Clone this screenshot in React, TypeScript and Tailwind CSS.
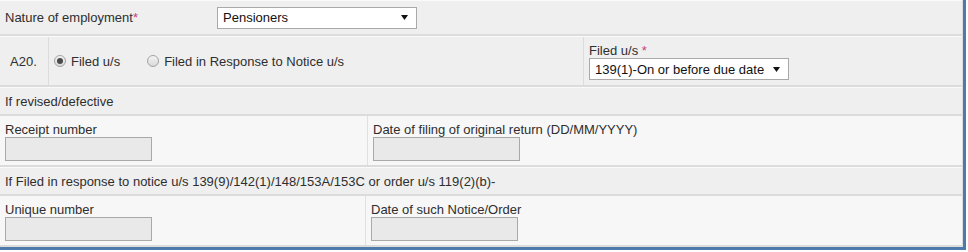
const Arrow = () => (
  <svg width="7" height="5" viewBox="0 0 7 5" className="shrink-0">
    <polygon points="0,0 7,0 3.5,5" fill="#111" />
  </svg>
);

const FakeSelect = ({ value }: { value: string }) => (
  <div className="w-[200px] h-[22px] bg-white border border-[#a9a9a9] flex items-center justify-between pl-[5px] pr-[8px] text-[13px] text-[#111]">
    <span>{value}</span>
    <Arrow />
  </div>
);

const Radio = ({ checked }: { checked?: boolean }) => (
  <span className="w-[12px] h-[12px] rounded-full border border-[#a3a3a3] bg-gradient-to-b from-[#f4f4f4] to-[#d9d9d9] flex items-center justify-center shrink-0">
    {checked && <span className="w-[6px] h-[6px] rounded-full bg-[#4a4a4a]" />}
  </span>
);

const Req = () => <span className="text-[#c8407a]">*</span>;

const Box = () => <div className="w-[147px] h-[24px] border border-[#a9a9a9] bg-[#e9e9e9]" />;

const App = () => {
  return (
    <div className="w-[966px] h-[250px] bg-[#dcdcdc] border-r-[3px] border-b-[3px] border-[#4e7bab] flex flex-col gap-[2px] pb-[2px] pr-[1px] font-['Liberation_Sans',Arial,sans-serif] text-[13px] leading-[15px] text-[#2e2e2e]">
      {/* nature of employment */}
      <div className="h-[34px] shrink-0 border-t border-[#fafafa] bg-[#efefef] flex items-center">
        <div className="w-[217px] pl-[5px]">
          Nature of employment<Req />
        </div>
        <FakeSelect value="Pensioners" />
      </div>

      {/* A20 */}
      <div className="h-[49px] shrink-0 border-t border-[#fafafa] bg-[#efefef] flex">
        <div className="w-[49px] border-r border-[#dcdcdc] flex items-center pl-[10px]">A20.</div>
        <div className="w-[535px] border-r border-[#dcdcdc] flex items-center pl-[5px]">
          <Radio checked />
          <span className="ml-[5px]">Filed u/s</span>
          <span className="ml-[27px]">
            <Radio />
          </span>
          <span className="ml-[5px]">Filed in Response to Notice u/s</span>
        </div>
        <div className="flex-1 pl-[5px] pt-[6px] flex flex-col">
          <div>
            Filed u/s <Req />
          </div>
          <FakeSelect value="139(1)-On or before due date" />
        </div>
      </div>

      <div className="h-[27px] shrink-0 border-t border-[#fafafa] bg-[#efefef] flex items-center pl-[5px]">
        If revised/defective
      </div>

      <div className="h-[49px] shrink-0 bg-[#f7f7f7] flex">
        <div className="w-[368px] border-r border-[#e0e0e0] pl-[5px] pt-[6px]">
          <div>Receipt number</div>
          <Box />
        </div>
        <div className="flex-1 pl-[5px] pt-[6px]">
          <div>Date of filing of original return (DD/MM/YYYY)</div>
          <Box />
        </div>
      </div>

      <div className="h-[27px] shrink-0 border-t border-[#fafafa] bg-[#efefef] flex items-center pl-[5px]">
        If Filed in response to notice u/s 139(9)/142(1)/148/153A/153C or order u/s 119(2)(b)-
      </div>

      <div className="h-[49px] shrink-0 bg-[#f7f7f7] flex">
        <div className="w-[366px] border-r border-[#e0e0e0] pl-[5px] pt-[6px]">
          <div>Unique number</div>
          <Box />
        </div>
        <div className="flex-1 pl-[5px] pt-[6px]">
          <div>Date of such Notice/Order</div>
          <Box />
        </div>
      </div>
    </div>
  );
};

export default App;
